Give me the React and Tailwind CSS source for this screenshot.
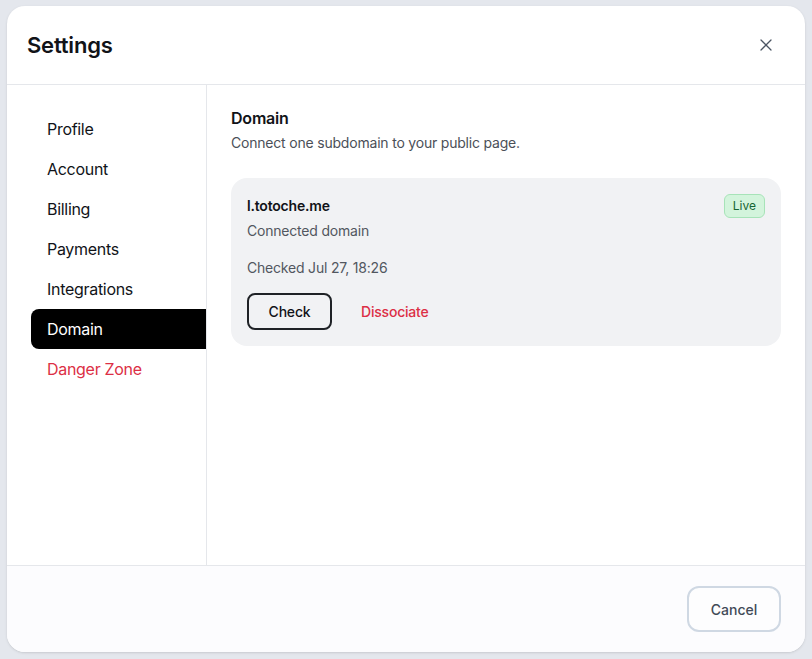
import { X } from "lucide-react";

const navItems = ["Profile", "Account", "Billing", "Payments", "Integrations"];

const App = () => {
  return (
    <div
      className="w-[812px] h-[659px] bg-[#e4e7ed] pt-[6px] pl-[7px]"
      style={{ fontFamily: "Inter, 'Noto Sans', sans-serif" }}>
      <div className="w-[798px] h-[646px] bg-white rounded-[18px] flex flex-col overflow-hidden shadow-sm">
        <div className="h-[79px] shrink-0 flex items-center justify-between pl-5 pr-[29px] border-b border-[#e5e7eb]">
          <h1 className="text-[22px] font-semibold text-[#111318] tracking-[-0.2px]">
            Settings
          </h1>
          <X className="w-5 h-5 text-[#4b5563]" strokeWidth={1.5} />
        </div>

        <div className="flex-1 flex min-h-0">
          <div className="w-[200px] shrink-0 border-r border-[#e5e7eb] pt-6 pl-6">
            <ul className="flex flex-col tracking-[-0.3px]">
              {navItems.map((item) => (
                <li
                  key={item}
                  className="h-10 flex items-center pl-4 text-base text-[#111318]">
                  {item}
                </li>
              ))}
              <li className="h-10 flex items-center pl-4 text-base text-white bg-black rounded-l-lg">
                Domain
              </li>
              <li className="h-10 flex items-center pl-4 text-base text-[#dc2f45]">
                Danger Zone
              </li>
            </ul>
          </div>

          <div className="flex-1 pt-[21px] pl-6 pr-6 tracking-[-0.2px]">
            <h2 className="text-base font-semibold text-[#111318] leading-6">
              Domain
            </h2>
            <p className="text-sm text-[#4b5058] mt-[3px]">
              Connect one subdomain to your public page.
            </p>

            <div className="mt-[25px] bg-[#f1f2f4] rounded-2xl p-4 h-[168px]">
              <div className="flex items-start justify-between">
                <div>
                  <p className="text-sm font-semibold text-[#111318] mt-[2px]">
                    l.totoche.me
                  </p>
                  <p className="text-sm text-[#52575f] mt-[5px]">
                    Connected domain
                  </p>
                </div>
                <span className="text-xs text-[#166534] bg-[#d3f4dc] border border-[#a7e3b8] rounded-md px-2 py-[3px] tracking-normal">
                  Live
                </span>
              </div>
              <p className="text-sm text-[#52575f] mt-[17px]">
                Checked Jul 27, 18:26
              </p>
              <div className="flex items-center gap-[29px] mt-[15px]">
                <button className="w-[85px] h-[37px] border-2 border-[#1f2226] rounded-lg text-sm font-medium text-[#111318]">
                  Check
                </button>
                <button className="text-sm font-medium text-[#dc2f45]">
                  Dissociate
                </button>
              </div>
            </div>
          </div>
        </div>

        <div className="h-[87px] shrink-0 border-t border-[#e5e7eb] bg-[#fcfcfe] flex items-center justify-end pr-6">
          <button className="w-[94px] h-[46px] border-2 border-[#cfd8e3] rounded-xl text-[14px] font-medium text-[#414a57] bg-white/40">
            Cancel
          </button>
        </div>
      </div>
    </div>
  );
};

export default App;
